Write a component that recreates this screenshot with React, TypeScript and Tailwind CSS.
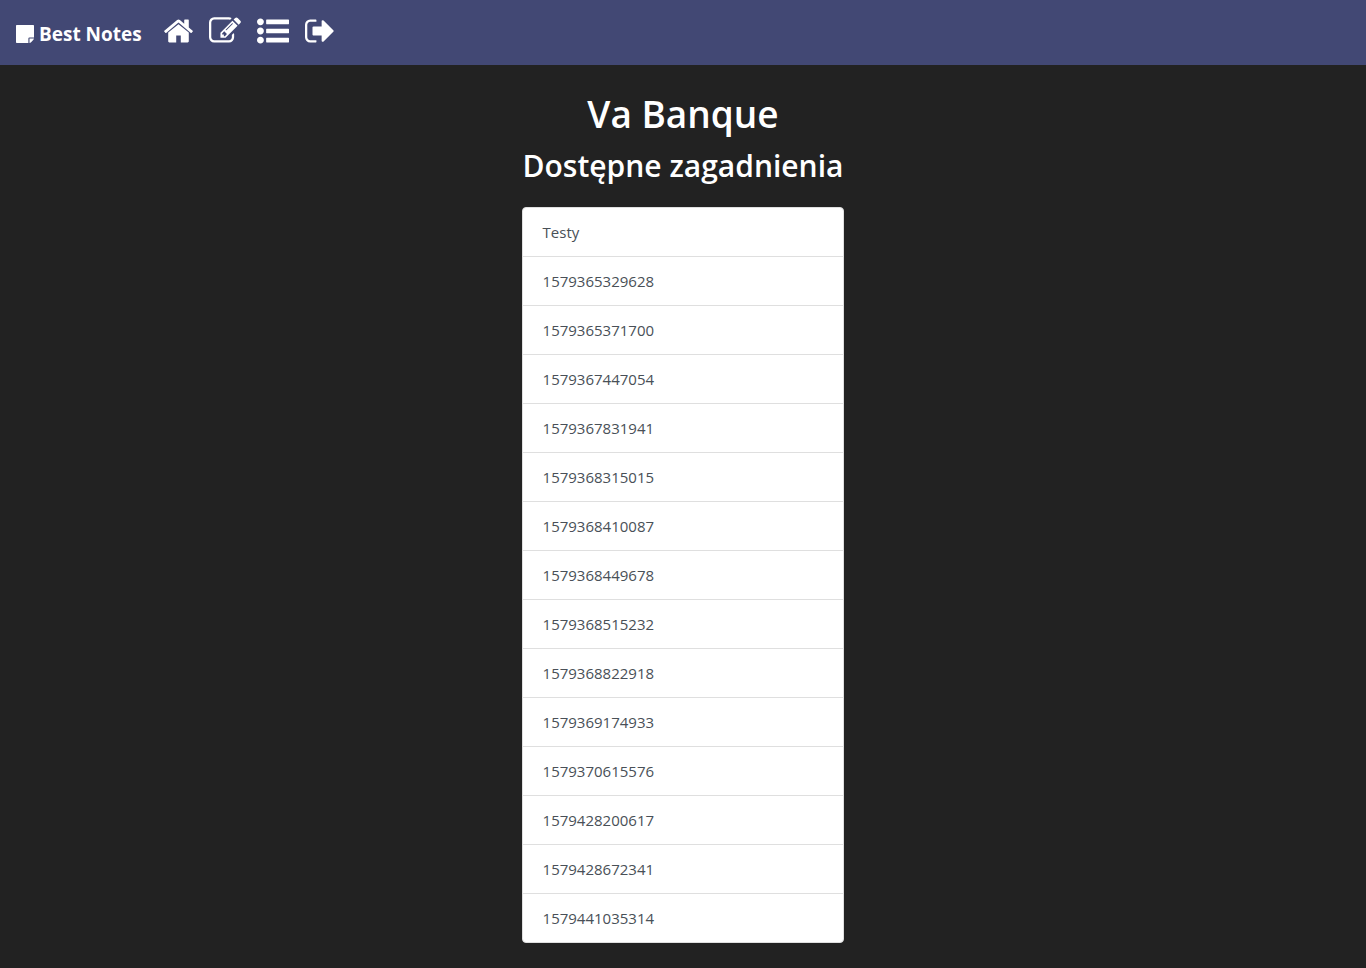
const navItems = [
  {
    label: 'Strona główna',
    viewBox: '84 0 1624 1792',
    size: 'h-8 w-[29px]',
    path: 'M1472 992v480q0 26-19 45t-45 19h-384v-384h-256v384h-384q-26 0-45-19t-19-45v-480q0-1 .5-3t.5-3l575-474 575 474q1 2 1 6zm223-69l-62 74q-8 9-21 11h-3q-13 0-21-7l-692-577-692 577q-12 8-24 7-13-2-21-11l-62-74q-8-10-7-23.5t11-21.5l719-599q32-26 76-26t76 26l244 204v-195q0-14 9-23t23-9h192q14 0 23 9t9 23v408l219 182q10 8 11 21.5t-7 23.5z',
  },
  {
    label: 'Nowa notatka',
    viewBox: '0 0 1792 1792',
    size: 'size-8',
    path: 'M888 1184l116-116-152-152-116 116v56h96v96h56zm440-720q-16-16-33 1l-350 350q-17 17-1 33t33-1l350-350q17-17 1-33zm80 594v190q0 119-84.5 203.5t-203.5 84.5h-832q-119 0-203.5-84.5t-84.5-203.5v-832q0-119 84.5-203.5t203.5-84.5h832q63 0 117 25 15 7 18 23 3 17-9 29l-49 49q-14 14-32 8-23-6-45-6h-832q-66 0-113 47t-47 113v832q0 66 47 113t113 47h832q66 0 113-47t47-113v-126q0-13 9-22l64-64q15-15 35-7t20 29zm-96-738l288 288-672 672h-288v-288zm444 132l-92 92-288-288 92-92q28-28 68-28t68 28l152 152q28 28 28 68t-28 68z',
  },
  {
    label: 'Lista',
    viewBox: '0 0 1792 1792',
    size: 'size-8',
    path: 'M384 1408q0 80-56 136t-136 56-136-56-56-136 56-136 136-56 136 56 56 136zm0-512q0 80-56 136t-136 56-136-56-56-136 56-136 136-56 136 56 56 136zm1408 416v192q0 13-9.5 22.5t-22.5 9.5h-1216q-13 0-22.5-9.5t-9.5-22.5v-192q0-13 9.5-22.5t22.5-9.5h1216q13 0 22.5 9.5t9.5 22.5zm-1408-928q0 80-56 136t-136 56-136-56-56-136 56-136 136-56 136 56 56 136zm1408 416v192q0 13-9.5 22.5t-22.5 9.5h-1216q-13 0-22.5-9.5t-9.5-22.5v-192q0-13 9.5-22.5t22.5-9.5h1216q13 0 22.5 9.5t9.5 22.5zm0-512v192q0 13-9.5 22.5t-22.5 9.5h-1216q-13 0-22.5-9.5t-9.5-22.5v-192q0-13 9.5-22.5t22.5-9.5h1216q13 0 22.5 9.5t9.5 22.5z',
  },
  {
    label: 'Wyloguj',
    viewBox: '64 0 1624 1792',
    size: 'h-8 w-[29px]',
    path: 'M704 1440q0 4 1 20t.5 26.5-3 23.5-10 19.5-20.5 6.5h-320q-119 0-203.5-84.5t-84.5-203.5v-704q0-119 84.5-203.5t203.5-84.5h320q13 0 22.5 9.5t9.5 22.5q0 4 1 20t.5 26.5-3 23.5-10 19.5-20.5 6.5h-320q-66 0-113 47t-47 113v704q0 66 47 113t113 47h312l11.5 1 11.5 3 8 5.5 7 9 2 13.5zm964-544q0 26-19 45l-544 544q-19 19-45 19t-45-19-19-45v-288h-448q-26 0-45-19t-19-45v-384q0-26 19-45t45-19h448v-288q0-26 19-45t45-19 45 19l544 544q19 19 19 45z',
  },
];

const topics = [
  'Testy',
  '1579365329628',
  '1579365371700',
  '1579367447054',
  '1579367831941',
  '1579368315015',
  '1579368410087',
  '1579368449678',
  '1579368515232',
  '1579368822918',
  '1579369174933',
  '1579370615576',
  '1579428200617',
  '1579428672341',
  '1579441035314',
];

function NavBar() {
  return (
    <nav className="flex h-[65px] items-center gap-[22px] bg-[#424874] px-4 text-white">
      <a href="#" className="flex items-center gap-[5px] pt-[3px] text-[19px] leading-8 font-bold">
        <svg viewBox="0 0 1536 1536" className="size-[18px]" fill="currentColor" aria-hidden="true">
          <path d="M1056 1152v384H64q-64 0-64-64V64Q0 0 64 0h1408q64 0 64 64v992h-384q-96 0-96 96zM1152 1152h381q-15 82-65 132l-184 184q-50 50-132 65z" />
        </svg>
        Best Notes
      </a>
      <ul className="flex items-center gap-4 pb-[3px]">
        {navItems.map((item) => (
          <li key={item.label}>
            <a href="#" aria-label={item.label} className="block">
              <svg viewBox={item.viewBox} className={item.size} fill="currentColor" aria-hidden="true">
                <path d={item.path} />
              </svg>
            </a>
          </li>
        ))}
      </ul>
    </nav>
  );
}

export default function App() {
  return (
    <div className="min-h-screen bg-[#222222] font-['Open_Sans','Noto_Sans',sans-serif]">
      <NavBar />
      <main className="flex flex-col items-center px-4 pt-[25px] pb-6 text-white">
        <h1 className="mb-2 text-[37px] leading-12 font-semibold">Va Banque</h1>
        <div>
          <h2 className="mb-[21px] px-px text-center text-[30px] leading-10 font-semibold">Dostępne zagadnienia</h2>
          <ul className="divide-y divide-[#dfdfdf] overflow-hidden rounded border border-[#dfdfdf] bg-white text-[15px] leading-6 text-[#495057]">
            {topics.map((topic) => (
              <li key={topic}>
                <a href="#" className="block px-5 py-3">
                  {topic}
                </a>
              </li>
            ))}
          </ul>
        </div>
      </main>
    </div>
  );
}
